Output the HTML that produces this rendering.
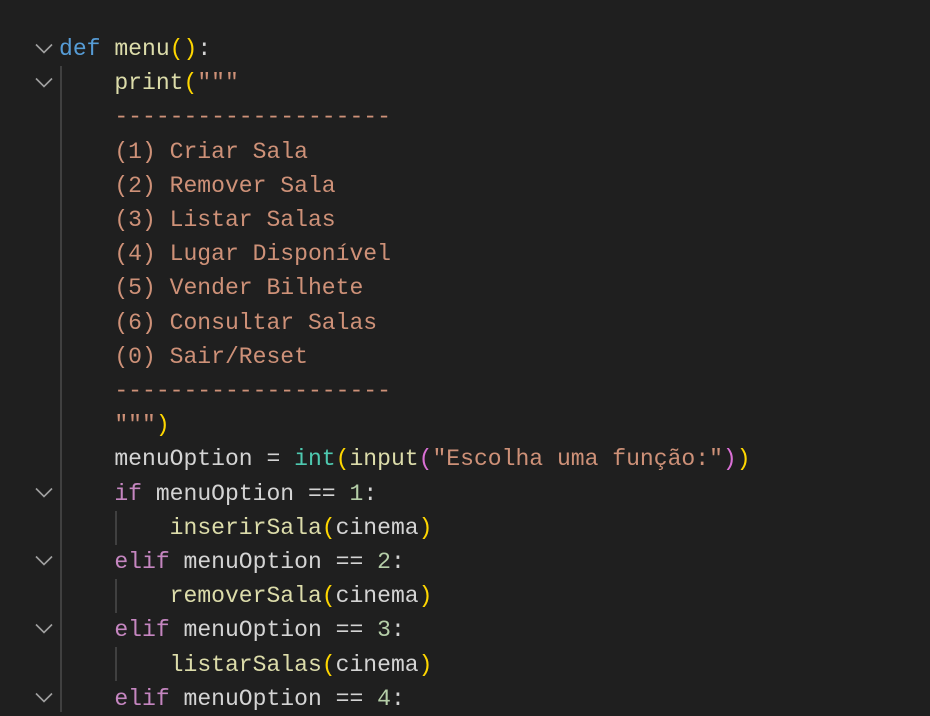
<!DOCTYPE html>
<html><head><meta charset="utf-8"><style>
body{margin:0;width:930px;height:712px;background:#1f1f1f;overflow:hidden;position:relative;font-family:"Liberation Mono",monospace;font-size:23.05px;color:#d4d4d4}
.l{position:absolute;left:59px;height:34.2px;line-height:34.2px;white-space:pre}
.k{color:#569cd6}.f{color:#dcdcaa}.s{color:#ce9178}.y{color:#ffd700}.p{color:#da70d6}.c{color:#c586c0}.t{color:#4ec9b0}.n{color:#b5cea8}.v{color:#d4d4d4}
.g{position:absolute;width:2px;background:#404040}
.ch{position:absolute;left:35px;width:18px;height:11px}
</style></head><body>
<div class="g" style="left:60px;top:66px;height:646px"></div>
<div class="g" style="left:115px;top:511px;height:34px"></div>
<div class="g" style="left:115px;top:579px;height:34px"></div>
<div class="g" style="left:115px;top:647px;height:34px"></div>
<svg class="ch" style="top:43px" viewBox="0 0 18 11"><path d="M1 1.5l8 8 8-8" stroke="#a0a0a0" stroke-width="1.6" fill="none"/></svg>
<svg class="ch" style="top:77px" viewBox="0 0 18 11"><path d="M1 1.5l8 8 8-8" stroke="#a0a0a0" stroke-width="1.6" fill="none"/></svg>
<svg class="ch" style="top:487px" viewBox="0 0 18 11"><path d="M1 1.5l8 8 8-8" stroke="#a0a0a0" stroke-width="1.6" fill="none"/></svg>
<svg class="ch" style="top:555px" viewBox="0 0 18 11"><path d="M1 1.5l8 8 8-8" stroke="#a0a0a0" stroke-width="1.6" fill="none"/></svg>
<svg class="ch" style="top:623px" viewBox="0 0 18 11"><path d="M1 1.5l8 8 8-8" stroke="#a0a0a0" stroke-width="1.6" fill="none"/></svg>
<svg class="ch" style="top:692px" viewBox="0 0 18 11"><path d="M1 1.5l8 8 8-8" stroke="#a0a0a0" stroke-width="1.6" fill="none"/></svg>
<div class="l" style="top:32px"><span class="k">def</span> <span class="f">menu</span><span class="y">()</span>:</div>
<div class="l" style="top:66.2px">    <span class="f">print</span><span class="y">(</span><span class="s">"""</span></div>
<div class="l s" style="top:100.4px">    --------------------</div>
<div class="l s" style="top:134.6px">    (1) Criar Sala</div>
<div class="l s" style="top:168.8px">    (2) Remover Sala</div>
<div class="l s" style="top:203px">    (3) Listar Salas</div>
<div class="l s" style="top:237.2px">    (4) Lugar Disponível</div>
<div class="l s" style="top:271.4px">    (5) Vender Bilhete</div>
<div class="l s" style="top:305.6px">    (6) Consultar Salas</div>
<div class="l s" style="top:339.8px">    (0) Sair/Reset</div>
<div class="l s" style="top:374px">    --------------------</div>
<div class="l" style="top:408.2px">    <span class="s">"""</span><span class="y">)</span></div>
<div class="l" style="top:442.4px">    menuOption = <span class="t">int</span><span class="y">(</span><span class="f">input</span><span class="p">(</span><span class="s">"Escolha uma função:"</span><span class="p">)</span><span class="y">)</span></div>
<div class="l" style="top:476.6px">    <span class="c">if</span> menuOption == <span class="n">1</span>:</div>
<div class="l" style="top:510.8px">        <span class="f">inserirSala</span><span class="y">(</span>cinema<span class="y">)</span></div>
<div class="l" style="top:545px">    <span class="c">elif</span> menuOption == <span class="n">2</span>:</div>
<div class="l" style="top:579.2px">        <span class="f">removerSala</span><span class="y">(</span>cinema<span class="y">)</span></div>
<div class="l" style="top:613.4px">    <span class="c">elif</span> menuOption == <span class="n">3</span>:</div>
<div class="l" style="top:647.6px">        <span class="f">listarSalas</span><span class="y">(</span>cinema<span class="y">)</span></div>
<div class="l" style="top:681.8px">    <span class="c">elif</span> menuOption == <span class="n">4</span>:</div>
</body></html>
